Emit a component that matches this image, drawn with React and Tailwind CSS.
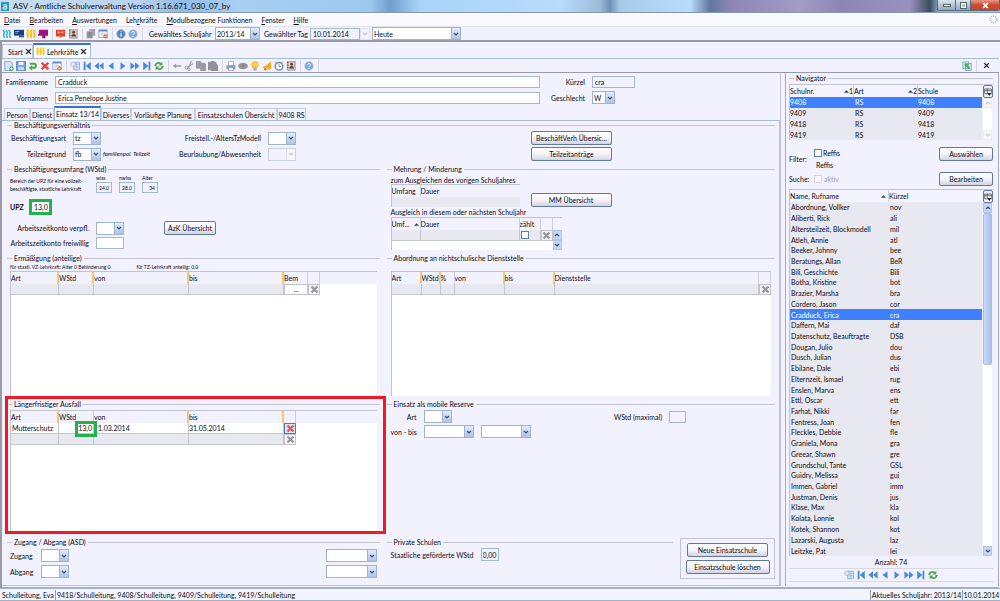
import { useState } from 'react';
import clsx from 'clsx';

const MENU = [
  ['', 'D', 'atei'],
  ['', 'B', 'earbeiten'],
  ['', 'A', 'uswertungen'],
  ['Leh', 'r', 'kräfte'],
  ['', 'M', 'odulbezogene Funktionen'],
  ['', 'F', 'enster'],
  ['', 'H', 'ilfe'],
];

const SUB_TABS = [
  { label: 'Person', width: 'w-[26px]' },
  { label: 'Dienst', width: 'w-[24px]' },
  { label: 'Einsatz 13/14', width: 'w-[47px]' },
  { label: 'Diverses', width: 'w-[30px]' },
  { label: 'Vorläufige Planung', width: 'w-[64px]' },
  { label: 'Einsatzschulen Übersicht', width: 'w-[82px]' },
  { label: '9408 RS', width: 'w-[29px]' },
];

const SCHOOLS = ['9408', '9409', '9418', '9419'];

const TEACHERS = [
  ['Abordnung, Vollker', 'nov'],
  ['Aliberti, Rick', 'ali'],
  ['Altersteilzeit, Blockmodell', 'mil'],
  ['Atleh, Annie', 'atl'],
  ['Beeker, Johnny', 'bee'],
  ['Beratungs, Allan', 'BeR'],
  ['Bili, Geschichte', 'Bili'],
  ['Botha, Kristine', 'bot'],
  ['Brazier, Marsha', 'bra'],
  ['Cordero, Jason', 'cor'],
  ['Cradduck, Erica', 'cra'],
  ['Daffern, Mai', 'daf'],
  ['Datenschutz, Beauftragte', 'DSB'],
  ['Dougan, Julio', 'dou'],
  ['Dusch, Julian', 'dus'],
  ['Ebilane, Dale', 'ebi'],
  ['Elternzeit, Ismael', 'rug'],
  ['Enslen, Marva', 'ens'],
  ['Ettl, Oscar', 'ett'],
  ['Farhat, Nikki', 'far'],
  ['Fentress, Joan', 'fen'],
  ['Fleckles, Debbie', 'fle'],
  ['Graniela, Mona', 'gra'],
  ['Greear, Shawn', 'gre'],
  ['Grundschul, Tante', 'GSL'],
  ['Guidry, Melissa', 'gui'],
  ['Immen, Gabriel', 'imm'],
  ['Justman, Denis', 'jus'],
  ['Klase, Max', 'kla'],
  ['Kolata, Lonnie', 'kol'],
  ['Kotek, Shannon', 'kot'],
  ['Lazarski, Augusta', 'laz'],
  ['Leitzke, Pat', 'lei'],
];

const ICONS = {
  waves: <path d="M1 1l2 3-1 3 1 4M4.500 1l2 3-1 3 1 4M8 1l2 3-1 3 1 4" fill="none" stroke="#35b4d8" strokeWidth="1.800" />,
  board: (
    <>
      <path d="M0 1h12v7H0z" fill="#17407c" />
      <path d="M1.500 3h5M1.500 5h3" stroke="#8fb4dc" />
      <path d="M6 8h6v2H6z" fill="#2a5a9a" />
    </>
  ),
  people: (
    <g fill="#fbc011">
      <circle cx="2" cy="2" r="1.500" /><circle cx="6" cy="2" r="1.500" /><circle cx="10" cy="2" r="1.500" />
      <path d="M.5 4h3l-.6 7H1.100zM4.500 4h3l-.6 7H5.100zM8.500 4h3l-.6 7H9.100z" />
    </g>
  ),
  classroom: <path d="M1 1h11v7h-3v3H5V8H0V6h1z" fill="#9c1580" />,
  redBook: (
    <>
      <path d="M0 1h11v8H7l-2 2V9H0z" fill="#e2452a" />
      <path d="M2 3h3v2H2zM6 3h3v2H6z" fill="#f7a08c" />
    </>
  ),
  contact: (
    <>
      <path d="M2 0h9v11H2z" fill="#d8c9bd" stroke="#7b7b86" strokeWidth=".8" />
      <path d="M1 2h2M1 5h2M1 8h2" stroke="#555" />
      <circle cx="6.800" cy="3.800" r="1.700" fill="#7b3b20" />
      <path d="M4 9c0-4 5.500-4 5.500 0z" fill="#46464e" />
    </>
  ),
  copies: (
    <>
      <path d="M4 0h7v8H4z" fill="#a5a5ac" />
      <path d="M1 3h7v8H1z" fill="#8d8d94" stroke="#b8b8c0" strokeWidth=".5" />
    </>
  ),
  windowOff: (
    <>
      <path d="M1 1h10v9H1z" fill="#fff" stroke="#7fa1cf" />
      <path d="M1 1h10v2H1z" fill="#5d8cc8" />
      <path d="M3 5h6M3 7h4" stroke="#a8bcd8" />
      <circle cx="9" cy="8.800" r="2.600" fill="#f0672c" />
      <path d="M7.600 8.800h2.800" stroke="#fff" />
    </>
  ),
  info: (
    <>
      <circle cx="6" cy="6" r="5" fill="#4f86c4" stroke="#8a9fb8" />
      <path d="M6 5v4M6 2.800v1.200" stroke="#e6f1ff" strokeWidth="1.500" />
    </>
  ),
  help: (
    <>
      <circle cx="6" cy="6" r="5" fill="#7fa9d8" stroke="#aab8cc" />
      <path d="M4.200 4.600C4.400 2.400 8 2.600 7.700 4.700 7.500 6 6 5.800 6 7.300M6 8.400v1.200" fill="none" stroke="#fff" strokeWidth="1.200" />
    </>
  ),
  newDoc: (
    <>
      <path d="M1 .5h7l2 2v9H1z" fill="#d3e5f8" stroke="#6f9bd0" />
      <circle cx="9" cy="9.200" r="2.600" fill="#49a842" />
      <path d="M9 7.600v3.200M7.400 9.200h3.200" stroke="#fff" />
    </>
  ),
  save: (
    <>
      <path d="M.5.5h11v11H.5z" fill="#6f9fd8" stroke="#4a78b4" />
      <path d="M3 1h6v4H3z" fill="#eef4fb" />
      <path d="M2.500 7h7v4h-7z" fill="#cbdcf0" />
    </>
  ),
  undo: <path d="M2 2h5a3.700 3.700 0 010 7.400H5v2L.8 8.200 5 5v2h2a1.200 1.200 0 000-2.500H2z" fill="#52a63c" />,
  remove: <path d="M2 2l8 8M10 2l-8 8" stroke="#f03a30" strokeWidth="2.600" />,
  table: (
    <>
      <path d="M4.500 1.500h7v9h-7z" fill="#dce9f7" stroke="#84a8d2" />
      <path d="M5 4h6M5 7h6M8 2v8" stroke="#84a8d2" strokeWidth=".7" />
      <circle cx="3.500" cy="4" r="2.700" fill="#e8e8ea" stroke="#a2a6ae" strokeWidth=".7" />
    </>
  ),
  first: <path d="M2 1h2.200v10H2zM10.500 1v10l-6-5z" fill="#4a88dc" />,
  rewind: <path d="M6 1.500v9L.5 6zM11.500 1.500v9L6 6z" fill="#4a88dc" />,
  prev: <path d="M9 1.500v9L3 6z" fill="#4a88dc" />,
  next: <path d="M3 1.500v9L9 6z" fill="#4a88dc" />,
  forward: <path d="M.5 1.500v9L6 6zM6 1.500v9L11.500 6z" fill="#4a88dc" />,
  last: <path d="M7.800 1H10v10H7.800zM1.500 1v10l6-5z" fill="#4a88dc" />,
  refresh: (
    <g fill="#4fa84a">
      <path d="M0 6l2-3.500C4 .8 7 1 8.500 2.500L10 1v4.500H5.500L7 4C6 3 4.500 3.200 3.500 4L2.800 6z" />
      <path d="M12 6l-2 3.500C8 11.200 5 11 3.500 9.500L2 11V6.500h4.500L5 8c1 1 2.500.8 3.500 0l.7-2z" />
    </g>
  ),
  back: <path d="M1 6l4-3v2h6v2H5v2z" fill="#9a9aa0" />,
  scissors: (
    <>
      <path d="M9 0L5 8M11 3L4.500 7.500" stroke="#a0a0a6" strokeWidth="1.400" />
      <circle cx="3" cy="8" r="1.700" fill="none" stroke="#8c8c92" /><circle cx="6" cy="10" r="1.400" fill="none" stroke="#8c8c92" />
    </>
  ),
  copy: <path d="M0 0h6v2h4l2 2v8H5V9H0z" fill="#9b9ba1" />,
  paste: <path d="M0 1h3l1-1h3l1 1h2v2l2 2v7H4v-1H0z" fill="#919197" />,
  print: (
    <>
      <path d="M3 .5h6v5H3z" fill="#fff" stroke="#8093ad" strokeWidth=".8" />
      <path d="M.5 5h11v5H.5z" fill="#8fa2bb" />
      <path d="M3 8h6v3.500H3z" fill="#eef3f9" stroke="#64748b" strokeWidth=".6" />
    </>
  ),
  eye: (
    <>
      <ellipse cx="6" cy="6" rx="6" ry="4" fill="#98989e" />
      <circle cx="6" cy="6" r="2" fill="#85858b" />
    </>
  ),
  bulb: (
    <>
      <circle cx="6" cy="4.500" r="4" fill="#ffce3c" stroke="#e0a82a" strokeWidth=".6" />
      <path d="M4 8h4v3.500H4z" fill="#a9a9b4" />
    </>
  ),
  bell: (
    <>
      <path d="M10.500.5L11 8 9.500 11C7 8.500 3.500 8 .5 9L2 6.500C6 6 7 3 10.500.5z" fill="#f4a81c" />
      <circle cx="4" cy="10" r="1.500" fill="#c87a12" />
    </>
  ),
  clock: (
    <>
      <circle cx="6" cy="6.400" r="4.600" fill="#fff" stroke="#4b8bd3" strokeWidth="1.600" />
      <path d="M6 3.800v2.800h2.200" fill="none" stroke="#e0503a" />
      <path d="M1 2.500L3 .8M11 2.500L9 .8" stroke="#efb23b" strokeWidth="1.500" />
    </>
  ),
  share: (
    <>
      <path d="M1 1h7v8H1zM4 3h7v8.500H4z" fill="#dcebf8" stroke="#6aa5d4" />
      <path d="M3 3l5 1-1 1.500 3 3-1.500 1.500-3-3L4 8z" fill="#52b03c" />
    </>
  ),
  columns: (
    <>
      <path d="M1 1.500h10v7H1z" fill="#fff" stroke="#333" />
      <path d="M1 4h10M5 1v7" stroke="#333" />
      <path d="M5 8h6l-3 3.500z" fill="#111" />
    </>
  ),
  close: <path d="M2 2l8 8M10 2l-8 8" stroke="#1c1c22" strokeWidth="2.200" />,
  discard: <path d="M2 2l8 8M10 2l-8 8" stroke="#97979b" strokeWidth="3" />,
  discardRed: <path d="M2 2l8 8M10 2l-8 8" stroke="#f2504e" strokeWidth="3" />,
  up: <path d="M2 8l4-4 4 4" fill="none" stroke="currentColor" strokeWidth="2.400" />,
  down: <path d="M2 4l4 4 4-4" fill="none" stroke="currentColor" strokeWidth="2.400" />,
  sort: <path d="M0 9l6-6 6 6z" fill="#26415f" />,
};

const Icon = ({ name, className = 'size-[10px]' }) => (
  <svg viewBox="0 0 12 12" className={clsx('block shrink-0', className)} aria-hidden="true">
    {ICONS[name]}
  </svg>
);

const ToolGroup = ({ icons }) => (
  <div className="flex items-center">
    {icons.map((name) => (
      <button key={name} type="button" aria-label={name} className="flex w-3 items-center justify-center">
        <Icon name={name} />
      </button>
    ))}
  </div>
);

const Divider = () => (
  <div className="flex w-[6px] shrink-0 justify-center">
    <div className="h-3 w-px bg-[#d3d5e2]" />
  </div>
);

const Button = ({ className, children }) => (
  <button
    type="button"
    className={clsx(
      'flex h-[14px] items-center justify-center rounded-[2px] border border-[#62799f] bg-linear-to-b from-white via-[#f4f4fa] to-[#d3d3df] whitespace-nowrap',
      className
    )}
  >
    {children}
  </button>
);

const TextBox = ({ className, label, value = '', readOnly }) => (
  <input
    type="text"
    aria-label={label}
    defaultValue={value}
    readOnly={readOnly}
    className={clsx(
      'h-3 min-w-0 border border-[#a3b8d3] px-[2px] outline-none',
      readOnly ? 'bg-[#f2f2fe]' : 'bg-white',
      className
    )}
  />
);

const Select = ({ className, label, value = '', disabled }) => (
  <div className={clsx('flex h-[13px] shrink-0 border', disabled ? 'border-[#c8d2e4]' : 'border-[#9fb4d0]', className)}>
    <select
      aria-label={label}
      disabled={disabled}
      defaultValue={value}
      className={clsx('min-w-0 flex-1 appearance-none px-px outline-none', disabled ? 'bg-[#f2f2fe]' : 'bg-white')}
    >
      <option value={value}>{value}</option>
    </select>
    <span
      className={clsx(
        'pointer-events-none flex w-[9px] items-center justify-center border-l',
        disabled
          ? 'border-[#d6dbe8] bg-[#f6f6fc] text-[#c4c8d4]'
          : 'border-[#9fb4d0] bg-linear-to-b from-[#e2ebfa] to-[#aec3e8] text-[#33507c]'
      )}
    >
      <Icon name="down" className="size-[6px]" />
    </span>
  </div>
);

const Group = ({ title, className, children }) => (
  <section className={clsx('flex min-w-0 flex-col', className)}>
    <div className="flex h-2 shrink-0 items-center gap-[2px]">
      <span className="h-px w-[5px] bg-[#c3c4d0]" />
      <h2 className="whitespace-nowrap">{title}</h2>
      <span className="h-px flex-1 bg-[#c3c4d0]" />
    </div>
    {children}
  </section>
);

// mark: a column that can be edited gets the amber bar on its right side
const HeadCell = ({ mark, children, end }) => (
  <th
    className={clsx(
      'h-3 overflow-hidden p-0 text-left font-normal whitespace-nowrap',
      !end && (mark ? 'border-r-2 border-[#fbc766]' : 'border-r border-[#cfd0dc]')
    )}
  >
    {children}
  </th>
);

const Grid = ({ columns, rows, className, children }) => (
  <div className={clsx('border-t border-l border-[#c3c4d0] bg-white', className)}>
    <table className="w-full table-fixed border-separate border-spacing-0">
      <colgroup>
        {columns.map((c, i) => (
          <col key={i} className={c.width} />
        ))}
      </colgroup>
      <thead className="bg-[#f2f2fe]">
        <tr>
          {columns.map((c, i) => (
            <HeadCell key={i} mark={c.mark} end={c.end}>
              {c.label}
            </HeadCell>
          ))}
        </tr>
      </thead>
      <tbody>{rows}</tbody>
    </table>
    {children}
  </div>
);

const EmptyCell = ({ children, className }) => (
  <td className={clsx('h-[11px] border-r border-b border-[#c3c4cc] bg-[#e8e8f1] p-0', className)}>{children}</td>
);

const DiscardCell = ({ active }) => (
  <td className="h-[11px] p-0">
    <button
      type="button"
      aria-label="Zeile löschen"
      className={clsx(
        'flex h-[11px] w-3 items-center justify-center border',
        active ? 'border-[#5a78a8] bg-[#d9e4f6]' : 'border-[#c3c4cc] bg-[#f4f4f8]'
      )}
    >
      <Icon name={active ? 'discardRed' : 'discard'} className="size-[9px]" />
    </button>
  </td>
);

const ScrollButton = ({ dir, disabled }) => (
  <button
    type="button"
    aria-label={dir}
    disabled={disabled}
    className={clsx(
      'flex h-[10px] w-[9px] shrink-0 items-center justify-center border',
      disabled ? 'border-[#ececf4] bg-[#f6f6fb] text-[#cfcfd8]' : 'border-[#b3c6e4] bg-[#c5d6f2] text-[#33507c]'
    )}
  >
    <Icon name={dir} className="size-[6px]" />
  </button>
);

const TitleBar = () => (
  <header className="flex h-[13px] shrink-0 items-center justify-between border-b border-[#8797ad] bg-[linear-gradient(90deg,#c9dcef_0%,#b9d3ee_14%,#8fbbe6_18%,#a9cff2_24%,#9cc8f0_37%,#6f9fce_39%,#a9d3f8_42%,#b8dcfb_56%,#9cbbd8_60%,#6e90b6_61%,#a7cbe9_62%,#b8dcfb_69%,#5f78a0_71%,#8d86b4_73%,#a39cc4_80%,#8d86b4_84%,#9a92bd_91%,#3c4c5e_93%,#9ab8d6_94%,#a9c4de_100%)]">
    <div className="flex items-center gap-1">
      <svg viewBox="0 0 10 11" className="ml-px h-[11px] w-2" aria-hidden="true">
        <path d="M0 0h10v11H0z" fill="#1c94d2" />
        <path d="M3 4c1-1 4-1 4 1v4M7 6c-5-1-5 3-3 3 1.500 0 3-1 3-2" fill="none" stroke="#fff" strokeWidth="1.400" />
      </svg>
      <h1 className="text-[8px]">ASV - Amtliche Schulverwaltung Version 1.16.671_030_07_by</h1>
    </div>
    <div className="flex h-[11px] self-start overflow-hidden rounded-b-[2px] border border-t-0 border-[#55697f]">
      <button type="button" aria-label="Minimieren" className="flex w-[17px] items-center justify-center bg-linear-to-b from-[#dbe6f0] to-[#94a9be]">
        <span className="h-[3px] w-2 border border-[#566] bg-white" />
      </button>
      <button type="button" aria-label="Wiederherstellen" className="flex w-4 items-center justify-center border-x border-[#55697f] bg-linear-to-b from-[#dbe6f0] to-[#94a9be]">
        <span className="size-[5px] border border-white outline-1 outline-[#566]" />
      </button>
      <button type="button" aria-label="Schließen" className="flex w-[28px] items-center justify-center bg-linear-to-b from-[#e39a86] via-[#cf4a2c] to-[#c5482f]">
        <svg viewBox="0 0 12 12" className="size-[7px]" aria-hidden="true">
          <path d="M2 2l8 8M10 2l-8 8" stroke="#fff" strokeWidth="3" />
        </svg>
      </button>
    </div>
  </header>
);

const MenuBar = () => (
  <nav className="flex h-[14px] shrink-0 items-center justify-between border-b border-[#e3e3ec] bg-[#faf9fe] pr-[2px] pl-1">
    <div className="flex gap-[9px]">
      {MENU.map(([before, key, after]) => (
        <button key={after} type="button">
          {before}
          <span className="underline">{key}</span>
          {after}
        </button>
      ))}
    </div>
    <svg viewBox="0 0 12 12" className="size-[9px]" aria-hidden="true">
      <circle cx="6" cy="6" r="4.400" fill="none" stroke="#b9b9c0" strokeWidth="2.400" strokeDasharray="1.500 1.300" />
    </svg>
  </nav>
);

const MainToolbar = () => (
  <div className="flex h-[15px] shrink-0 items-center border-b-2 border-[#9a9ba6] bg-[#f2f2fe] pl-px">
    <ToolGroup icons={['waves', 'board', 'people', 'classroom']} />
    <Divider />
    <ToolGroup icons={['redBook', 'contact']} />
    <Divider />
    <ToolGroup icons={['copies', 'windowOff']} />
    <Divider />
    <ToolGroup icons={['info', 'help']} />
    <Divider />
    <div className="flex items-center pl-1">
      <span className="w-[66px]">Gewähltes Schuljahr</span>
      <Select label="Gewähltes Schuljahr" value="2013/14" className="w-[45px]" />
      <span className="w-[50px] pl-1">Gewählter Tag</span>
      <TextBox label="Gewählter Tag" value="10.01.2014" readOnly className="w-[50px]" />
      <span className="mr-[2px] flex h-3 w-[10px] items-center justify-center border border-[#e0e2ec] text-[#c4c8d4]">
        <Icon name="down" className="size-[6px]" />
      </span>
      <Select label="Zeitpunkt" value="Heute" className="w-[89px]" />
    </div>
  </div>
);

const ViewTabs = () => (
  <div className="flex h-[17px] shrink-0 items-end border-b border-[#a9bcd6]">
    <button type="button" className="flex h-[14px] w-[31px] items-center gap-[2px] border border-b-0 border-[#b9c6da] pl-[5px]">
      Start <Icon name="close" className="size-[7px]" />
    </button>
    <button type="button" className="flex h-[15px] w-[58px] items-center gap-[2px] border border-t-2 border-b-0 border-[#a9bcd6] border-t-[#3a6fe0] bg-[#fbfbff] pl-[2px]">
      <Icon name="people" className="size-[9px]" /> Lehrkräfte <Icon name="close" className="size-[7px]" />
    </button>
  </div>
);

const ViewToolbar = () => (
  <div className="flex h-[14px] shrink-0 items-center border-b border-[#9a9ba6] pl-px">
    <ToolGroup icons={['newDoc', 'save', 'undo', 'remove', 'windowOff']} />
    <Divider />
    <ToolGroup icons={['table', 'first', 'rewind', 'prev', 'next', 'forward', 'last', 'refresh']} />
    <Divider />
    <ToolGroup icons={['back', 'scissors', 'copy', 'paste']} />
    <Divider />
    <ToolGroup icons={['print', 'eye', 'bulb', 'bell', 'clock', 'contact']} />
    <Divider />
    <ToolGroup icons={['help']} />
    <Divider />
    <div className="ml-auto flex items-center pr-[6px]">
      <ToolGroup icons={['share']} />
      <Divider />
      <button type="button" aria-label="Ansicht schließen" className="flex w-[14px] items-center justify-center">
        <Icon name="close" className="size-[7px]" />
      </button>
    </div>
  </div>
);

const PersonForm = () => (
  <div className="grid shrink-0 grid-cols-[46px_1fr_38px_188px] items-center gap-x-[7px] gap-y-[3px] pt-[3px] pb-[2px]">
    <label htmlFor="familienname" className="text-right">Familienname</label>
    <input id="familienname" defaultValue="Cradduck" className="h-3 border border-[#a3b8d3] bg-white px-[2px]" />
    <label htmlFor="kuerzel" className="text-right">Kürzel</label>
    <input id="kuerzel" readOnly value="cra" className="h-3 w-[43px] border border-[#a3b8d3] bg-[#f2f2fe] px-[2px]" />
    <label htmlFor="vornamen" className="text-right">Vornamen</label>
    <input id="vornamen" defaultValue="Erica Penelope Justine" className="h-3 border border-[#a3b8d3] bg-white px-[2px]" />
    <span className="text-right">Geschlecht</span>
    <Select label="Geschlecht" value="W" className="w-[23px]" />
  </div>
);

const SubTabs = () => {
  const [active, setActive] = useState('Einsatz 13/14');
  return (
    <div className="flex h-[15px] shrink-0 items-end border-b border-[#a9bcd6] pl-[2px]">
      {SUB_TABS.map(({ label, width }) => (
        <button
          key={label}
          type="button"
          onClick={() => setActive(label)}
          className={clsx(
            'flex items-center justify-center overflow-hidden border border-b-0 whitespace-nowrap',
            width,
            active === label
              ? 'h-[14px] border-[#a9bcd6] border-t-2 border-t-[#3a6fe0] bg-[#fbfbff]'
              : 'h-3 border-[#c4cfe0]'
          )}
        >
          {label}
        </button>
      ))}
    </div>
  );
};

const EMPLOYMENT_ROW = 'grid grid-cols-[59px_98px_83px_256px_1fr] items-center gap-x-[7px] pt-[2px]';

const Employment = () => (
  <Group title="Beschäftigungsverhältnis" className="h-[44px] shrink-0">
    <div className={EMPLOYMENT_ROW}>
      <span className="text-right">Beschäftigungsart</span>
      <Select label="Beschäftigungsart" value="tz" className="w-[28px]" />
      <span className="text-right whitespace-nowrap">Freistell.-/AltersTzModell</span>
      <Select label="Freistellung" className="w-[28px]" />
      <Button className="w-[81px]">BeschäftVerh Übersic...</Button>
    </div>
    <div className={EMPLOYMENT_ROW}>
      <span className="text-right">Teilzeitgrund</span>
      <div className="flex items-center gap-[2px]">
        <Select label="Teilzeitgrund" value="fb" className="w-[28px]" />
        <span className="text-[6px] whitespace-nowrap italic">familienpol. Teilzeit</span>
      </div>
      <span className="text-right whitespace-nowrap">Beurlaubung/Abwesenheit</span>
      <Select label="Beurlaubung" disabled className="w-[28px]" />
      <Button className="w-[81px]">Teilzeitanträge</Button>
    </div>
  </Group>
);

const Workload = () => (
  <Group title="Beschäftigungsumfang (WStd)">
    <div className="flex items-end gap-[7px] pt-[2px] pl-[3px] text-[5px]">
      <p className="w-[79px] leading-[8px] whitespace-nowrap">
        Bereich der UPZ für eine vollzeit-
        <br />
        beschäftigte, staatliche Lehrkraft
      </p>
      {[['wiss', '24.0'], ['nwiss', '28.0'], ['Alter', '34']].map(([label, value]) => (
        <label key={label} className="flex w-4 flex-col leading-[7px]">
          {label}
          <input readOnly value={value} className="h-[11px] w-full border border-[#a3b8d3] bg-[#f2f2fe] px-[2px] text-right" />
        </label>
      ))}
    </div>
    <div className="flex h-[28px] items-center gap-[5px] pl-[3px]">
      <label htmlFor="upz" className="font-bold">UPZ</label>
      <input id="upz" defaultValue="13,0" className="h-4 w-[23px] border-3 border-[#22b14c] bg-white px-px text-right" />
    </div>
    <div className="grid grid-cols-[82px_61px_1fr] items-center gap-x-[7px] gap-y-[2px]">
      <span className="text-right whitespace-nowrap">Arbeitszeitkonto verpfl.</span>
      <Select label="Arbeitszeitkonto verpfl." className="w-[28px]" />
      <Button className="w-[52px]">AzK Übersicht</Button>
      <span className="text-right whitespace-nowrap">Arbeitszeitkonto freiwillig</span>
      <TextBox label="Arbeitszeitkonto freiwillig" className="w-[28px]" />
    </div>
  </Group>
);

const Adjustments = () => (
  <Group title="Mehrung / Minderung">
    <div className="flex flex-col pt-[3px] pl-1">
      <span className="leading-[8px]">zum Ausgleichen des vorigen Schuljahres</span>
      <div className="flex items-end gap-[11px]">
        <Grid
          className="w-[129px]"
          columns={[{ label: 'Umfang', width: 'w-[29px]' }, { label: 'Dauer', end: true }]}
          rows={<tr><td colSpan={2} className="h-[10px] bg-[#e8e8f1] p-0" /></tr>}
        />
        <Button className="w-[81px]">MM Übersicht</Button>
      </div>
      <span className="pt-px leading-[9px]">Ausgleich in diesem oder nächsten Schuljahr</span>
      <div className="flex w-[171px] border-t border-[#c3c4d0]">
        <Grid
          className="flex-1 border-t-0"
          columns={[
            { label: <span className="flex items-center justify-between pr-px">Umf... <Icon name="sort" className="size-[5px]" /></span>, width: 'w-[29px]' },
            { label: 'Dauer' },
            { label: 'zählt', width: 'w-[21px]' },
            { label: '', width: 'w-[12px]' },
          ]}
          rows={
            <tr>
              <EmptyCell />
              <EmptyCell />
              <EmptyCell>
                <input type="checkbox" aria-label="zählt" className="ml-px block size-2 appearance-none border border-[#5c80b0] bg-white" />
              </EmptyCell>
              <DiscardCell />
            </tr>
          }
        />
        <div className="flex w-[9px] flex-col pt-3">
          <ScrollButton dir="up" />
          <ScrollButton dir="down" />
        </div>
      </div>
    </div>
  </Group>
);

const Reductions = () => (
  <Group title="Ermäßigung (anteilige)">
    <div className="flex min-h-0 flex-1 flex-col px-[3px] pb-1">
      <p className="flex h-[9px] shrink-0 items-center gap-[26px] pt-px text-[5px] whitespace-nowrap">
        <span>für staatl. VZ-Lehrkraft: Alter 0 Behinderung 0</span>
        <span>für TZ-Lehrkraft anteilig: 0.0</span>
      </p>
      <Grid
        className="flex-1"
        columns={[
          { label: 'Art', width: 'w-[48px]', mark: true },
          { label: 'WStd', width: 'w-[35px]', mark: true },
          { label: 'von', width: 'w-[95px]', mark: true },
          { label: 'bis', width: 'w-[95px]', mark: true },
          { label: 'Bem', width: 'w-[24px]' },
          { label: '', width: 'w-[12px]' },
          { label: '', end: true },
        ]}
        rows={
          <tr>
            <EmptyCell />
            <EmptyCell />
            <EmptyCell />
            <EmptyCell />
            <td className="p-0">
              <button type="button" aria-label="Bemerkung" className="block h-[11px] w-full border border-[#c3c4cc] bg-white leading-[7px]">...</button>
            </td>
            <DiscardCell />
          </tr>
        }
      />
    </div>
  </Group>
);

const Secondments = () => (
  <Group title="Abordnung an nichtschulische Dienststelle">
    <div className="flex min-h-0 flex-1 flex-col pt-[9px] pr-1 pb-1 pl-1">
      <Grid
        className="flex-1"
        columns={[
          { label: 'Art', width: 'w-[30px]', mark: true },
          { label: 'WStd', width: 'w-[19px]', mark: true },
          { label: '%', width: 'w-[14px]' },
          { label: 'von', width: 'w-[50px]', mark: true },
          { label: 'bis', width: 'w-[50px]', mark: true },
          { label: 'Dienststelle' },
          { label: '', width: 'w-[12px]' },
        ]}
        rows={
          <tr>
            {[0, 1, 2, 3, 4, 5].map((i) => (
              <EmptyCell key={i} />
            ))}
            <DiscardCell />
          </tr>
        }
      />
    </div>
  </Group>
);

const Absence = () => (
  <Group title="Längerfristiger Ausfall" className="relative">
    <div className="flex min-h-0 flex-1 flex-col px-[3px] pt-[2px] pb-1">
      <Grid
        className="flex-1"
        columns={[
          { label: 'Art', width: 'w-[48px]', mark: true },
          { label: 'WStd', width: 'w-[35px]' },
          { label: 'von', width: 'w-[95px]', mark: true },
          { label: 'bis', width: 'w-[95px]', mark: true },
          { label: '', width: 'w-[12px]' },
          { label: '', end: true },
        ]}
        rows={
          <>
            <tr>
              <td className="h-[11px] border-r border-b border-[#c3c4cc] p-0 pl-px">Mutterschutz</td>
              <td className="relative border-r border-b border-[#c3c4cc] p-0 pr-px text-right">
                13,0
                <span className="absolute -top-[2px] -right-1 h-4 w-[22px] border-3 border-[#22b14c]" />
              </td>
              <td className="border-r border-b border-[#c3c4cc] p-0 pl-1">1.03.2014</td>
              <td className="border-r border-b border-[#c3c4cc] p-0">31.05.2014</td>
              <DiscardCell active />
            </tr>
            <tr>
              <EmptyCell />
              <EmptyCell />
              <EmptyCell />
              <EmptyCell />
              <DiscardCell />
            </tr>
          </>
        }
      />
    </div>
    <div className="pointer-events-none absolute -top-1 -right-[6px] bottom-1 -left-[2px] border-3 border-[#ed1c24]" />
  </Group>
);

const MobileReserve = () => (
  <Group title="Einsatz als mobile Reserve">
    <div className="flex items-center pt-[2px] pl-1">
      <span className="w-[26px] text-right">Art</span>
      <Select label="Art" className="ml-[7px] w-[28px]" />
      <div className="ml-auto flex items-center gap-[7px] pr-[89px]">
        <label htmlFor="wstdmax">WStd (maximal)</label>
        <input id="wstdmax" className="h-3 w-[17px] border border-[#a3b8d3] bg-[#f2f2fe]" />
      </div>
    </div>
    <div className="flex items-center gap-[7px] pt-[2px] pl-1">
      <span className="w-[26px] text-right whitespace-nowrap">von - bis</span>
      <Select label="von" className="w-[50px]" />
      <Select label="bis" className="w-[50px]" />
    </div>
  </Group>
);

const Movement = () => (
  <Group title="Zugang / Abgang (ASD)">
    {['Zugang', 'Abgang'].map((label) => (
      <div key={label} className="flex items-center px-[3px] pt-[3px]">
        <span className="w-[31px]">{label}</span>
        <Select label={label} className="w-[28px]" />
        <Select label={`${label} Datum`} className="ml-auto w-[51px]" />
      </div>
    ))}
  </Group>
);

const PrivateSchools = () => (
  <div className="flex gap-[7px]">
    <Group title="Private Schulen" className="flex-1">
      <div className="flex items-center gap-[7px] pt-[2px] pl-1">
        <label htmlFor="gefoerdert" className="w-[83px] whitespace-nowrap">Staatliche geförderte WStd</label>
        <input id="gefoerdert" readOnly value="0,00" className="h-[13px] w-[18px] border border-[#a3b8d3] bg-[#f2f2fe] px-px" />
      </div>
    </Group>
    <div className="flex h-[41px] w-[95px] flex-col items-center justify-center gap-[3px] border border-[#c3c4d0]">
      <Button className="w-[81px]">Neue Einsatzschule</Button>
      <Button className="w-[84px]">Einsatzschule löschen</Button>
    </div>
  </div>
);

const TWO_COLUMNS = 'grid grid-cols-[373fr_389fr] gap-[7px]';

const ColumnsButton = () => (
  <button type="button" aria-label="Spalten" className="flex h-[13px] w-[10px] shrink-0 items-center justify-center rounded-[2px] border border-[#62799f] bg-[#eceef6]">
    <Icon name="columns" className="size-2" />
  </button>
);

const SchoolTable = () => (
  <div className="flex border-t border-l border-[#c3c4d0]">
    <div className="min-w-0 flex-1">
      <table className="h-[55px] w-full table-fixed border-separate border-spacing-0 bg-[#e8e8f1]">
        <thead className="bg-[#f4f4fe]">
          <tr>
            {[['Schulnr.', '1'], ['Art', '2'], ['Schule', '']].map(([label, order]) => (
              <HeadCell key={label} end={!order}>
                <span className="flex items-center justify-between">
                  {label}
                  {order && (
                    <span className="flex items-center"><Icon name="sort" className="size-[5px]" />{order}</span>
                  )}
                </span>
              </HeadCell>
            ))}
          </tr>
        </thead>
        <tbody>
          {SCHOOLS.map((nr, i) => (
            <tr key={nr} className={clsx(i === 0 && 'bg-[#3f80ff] text-white')}>
              <td className="p-0">{nr}</td>
              <td className="p-0 pl-px">RS</td>
              <td className="p-0">{nr}</td>
            </tr>
          ))}
        </tbody>
      </table>
    </div>
    <div className="flex w-[11px] flex-col items-center justify-between">
      <ColumnsButton />
      <div className="flex flex-1 flex-col justify-between bg-white">
        <ScrollButton dir="up" disabled />
        <ScrollButton dir="down" disabled />
      </div>
    </div>
  </div>
);

const TeacherTable = () => {
  const [selected, setSelected] = useState('cra');
  return (
    <div className="flex min-h-0 flex-1 border-t border-l border-[#c3c4d0]">
      <div className="min-w-0 flex-1">
        <table className="h-full w-full table-fixed border-separate border-spacing-0 bg-[#e8e8f1]">
          <colgroup>
            <col className="w-[99px]" />
            <col />
          </colgroup>
          <thead className="bg-[#f4f4fe]">
            <tr>
              <HeadCell>
                <span className="flex items-center justify-between pr-[2px]">
                  Name, Rufname <Icon name="sort" className="size-[5px]" />
                </span>
              </HeadCell>
              <HeadCell end>Kürzel</HeadCell>
            </tr>
          </thead>
          <tbody>
            {TEACHERS.map(([name, code]) => (
              <tr key={code} onClick={() => setSelected(code)} className={clsx(selected === code && 'bg-[#3f80ff] text-white')}>
                <td className="p-0 pl-px">{name}</td>
                <td className="p-0 pl-px">{code}</td>
              </tr>
            ))}
          </tbody>
        </table>
      </div>
      <div className="flex w-[11px] flex-col items-center">
        <ColumnsButton />
        <div className="flex min-h-0 flex-1 flex-col bg-white">
          <ScrollButton dir="up" />
          <div className="h-[43%] rounded-[2px] border border-[#a8bde2] bg-linear-to-r from-[#cbdaf6] to-[#a9c0ec]" />
          <div className="mt-auto"><ScrollButton dir="down" /></div>
        </div>
      </div>
    </div>
  );
};

const Navigator = () => (
  <aside className="flex w-[214px] shrink-0 flex-col border-r border-l border-[#a7adbb] pt-px pr-[5px] pl-[3px]">
    <Group title="Navigator" className="flex-1">
      <div className="flex min-h-0 flex-1 flex-col pt-[2px]">
        <SchoolTable />
        <div className="flex items-center pt-[6px]">
          <span className="w-[25px]">Filter:</span>
          <div className="flex flex-col">
            <label className="flex h-[13px] items-center gap-px">
              <input type="checkbox" className="size-2 appearance-none border border-[#5c80b0] bg-white" />
              Reffis
            </label>
            <span className="pl-[2px] leading-[12px]">Reffis</span>
          </div>
          <Button className="mb-[10px] ml-auto w-[54px]">Auswählen</Button>
        </div>
        <div className="flex items-center pt-px pb-[3px]">
          <span className="w-[25px]">Suche:</span>
          <label className="flex items-center gap-[2px] text-[#9b9ba6]">
            <input type="checkbox" disabled className="size-2 appearance-none border border-[#d5d6e0] bg-[#f8f8fc]" />
            aktiv
          </label>
          <Button className="ml-auto w-[54px]">Bearbeiten</Button>
        </div>
        <TeacherTable />
        <div className="h-3 shrink-0 text-center leading-3">Anzahl: 74</div>
        <div className="mb-1 flex h-[14px] shrink-0 items-center justify-center border-y border-[#d8d9e4]">
          <ToolGroup icons={['table', 'first', 'rewind', 'prev', 'next', 'forward', 'last', 'refresh']} />
        </div>
      </div>
    </Group>
  </aside>
);

const StatusBar = () => (
  <footer className="flex h-[13px] shrink-0 items-center border-t border-b border-[#a3b1c6] bg-[#f4f4fe] whitespace-nowrap">
    <span className="w-[56px] border-r border-[#8fa0bb] pl-[2px] leading-[10px]">Schulleitung, Eva</span>
    <span className="flex-1 border-r border-[#8fa0bb] pl-px leading-[10px]">
      9418/Schulleitung, 9408/Schulleitung, 9409/Schulleitung, 9419/Schulleitung
    </span>
    <span className="w-[92px] border-r border-[#8fa0bb] text-center leading-[10px]">Aktuelles Schuljahr: 2013/14</span>
    <span className="w-[37px] text-center leading-[10px]">10.01.2014</span>
  </footer>
);

const App = () => (
  <div className="flex h-screen flex-col overflow-hidden bg-[#f2f2fe] font-['Lato','Open_Sans',sans-serif] text-[7px] leading-[8px] text-[#0c0c14]">
    <TitleBar />
    <MenuBar />
    <MainToolbar />
    <div className="mr-px flex min-h-0 flex-1 flex-col border-l-2 border-[#9a9ba6]">
      <ViewTabs />
      <ViewToolbar />
      <div className="flex min-h-0 flex-1 gap-1 border-b border-[#a3b1c6] pb-px">
        <main className="flex min-w-0 flex-1 flex-col border-r border-[#c3c4d0]">
          <PersonForm />
          <SubTabs />
          <div className="flex min-h-0 flex-1 flex-col border-r border-b border-[#b8c4d8] pr-1 pl-[5px]">
            <Employment />
            <div className={clsx(TWO_COLUMNS, 'h-[89px] shrink-0')}>
              <Workload />
              <Adjustments />
            </div>
            <div className={clsx(TWO_COLUMNS, 'min-h-0 flex-1')}>
              <Reductions />
              <Secondments />
            </div>
            <div className={clsx(TWO_COLUMNS, 'h-[138px] shrink-0')}>
              <Absence />
              <MobileReserve />
            </div>
            <div className={clsx(TWO_COLUMNS, 'h-[47px] shrink-0')}>
              <Movement />
              <PrivateSchools />
            </div>
          </div>
        </main>
        <Navigator />
      </div>
    </div>
    <StatusBar />
  </div>
);

export default App;
